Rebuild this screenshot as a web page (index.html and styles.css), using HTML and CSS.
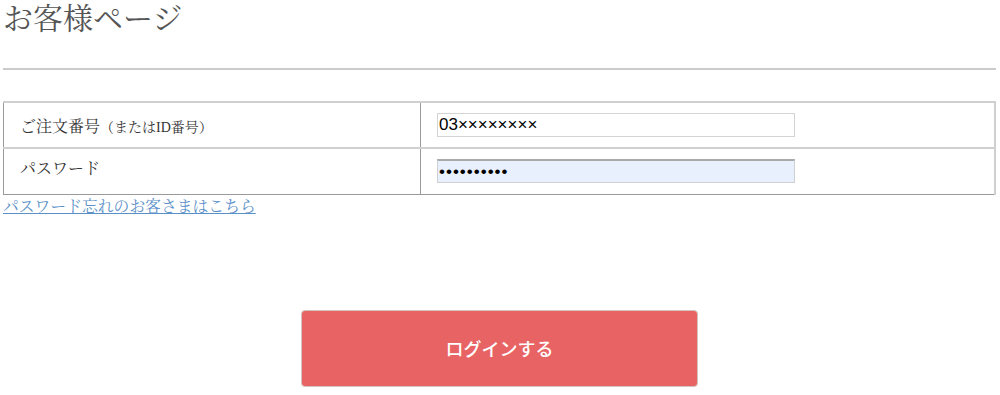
FILE: index.html
```html
<!DOCTYPE html>
<html lang="ja">
<head>
    <meta charset="UTF-8">
    <title>お客様ページ</title>
    <link rel="stylesheet" href="styles.css">
</head>
<body>
    <div class="page">
        <h1 class="page-title">お客様ページ</h1>
        <hr class="divider">

        <!-- Login form -->
        <form class="login-form" onsubmit="return false;">
            <table class="login-table">
                <tr>
                    <th>ご注文番号<span class="note">（またはID番号）</span></th>
                    <td><input type="text" class="text-input" value="03××××××××"></td>
                </tr>
                <tr class="password-row">
                    <th>パスワード</th>
                    <td><input type="password" class="text-input autofilled" value="1234567890"></td>
                </tr>
            </table>
            <a href="#" class="forgot-link">パスワード忘れのお客さまはこちら</a>

            <div class="submit-area">
                <button type="submit" class="login-button">ログインする</button>
            </div>
        </form>
    </div>
</body>
</html>
```

FILE: styles.css
```css
* {
    box-sizing: border-box;
}
body {
    margin: 0;
    background-color: #fff;
    font-family: "Liberation Serif", "Noto Serif CJK JP", "Noto Sans CJK JP", serif;
    color: #333;
}
.page {
    padding: 0 4px 0 3px;
}
.page-title {
    margin: 0;
    font-size: 30px;
    line-height: 38px;
    font-weight: normal;
    color: #555;
}
.divider {
    margin: 30px 0 31px;
    border: 0;
    border-top: 2px solid #cbcbcb;
}
.login-table {
    width: 100%;
    border-collapse: collapse;
    border-top: 2px solid #d0d0d0;
    border-right: 2px solid #d0d0d0;
    border-left: 1px solid #9a9a9a;
    border-bottom: 1px solid #9a9a9a;
}
.login-table th,
.login-table td {
    height: 46px;
    padding: 0 16px;
    text-align: left;
    vertical-align: middle;
}
.login-table tr + tr th,
.login-table tr + tr td {
    border-top: 2px solid #d0d0d0;
}
.login-table th {
    width: 417px;
    font-size: 16px;
    font-weight: normal;
    color: #333;
    border-right: 1px solid #9a9a9a;
}
.login-table .password-row th {
    padding-bottom: 8px;
}
.note {
    font-size: 14px;
}
.text-input {
    display: block;
    width: 358px;
    height: 24px;
    padding: 0 1px;
    border: 1px solid #d4d4d4;
    background-color: #fff;
    font-family: "Liberation Sans", Arial, sans-serif;
    font-size: 17px;
    color: #000;
}
.text-input.autofilled {
    background-color: #e8f0fe;
    border-color: #d0d0d0;
    border-top: 2px solid #a9a9a9;
    letter-spacing: 1px;
}
.forgot-link {
    display: inline-block;
    margin-top: 1px;
    font-size: 15.8px;
    line-height: 22px;
    color: #5b8fc8;
}
.submit-area {
    margin-top: 92px;
    text-align: center;
}
.login-button {
    width: 397px;
    height: 77px;
    background-color: #e86464;
    color: #fff;
    border: 1px solid #d3c4c4;
    border-radius: 4px;
    font-family: "Noto Sans CJK JP", sans-serif;
    font-size: 18px;
    font-weight: 500;
    cursor: pointer;
}
```
